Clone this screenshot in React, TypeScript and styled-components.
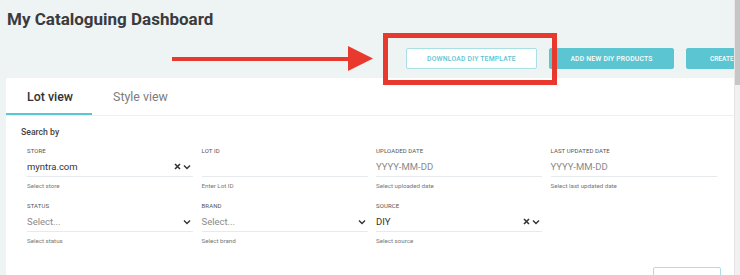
import styled, { createGlobalStyle } from "styled-components";

const teal = "#5bc5d1";
const red = "#e9392f";

const GlobalStyle = createGlobalStyle`
  body {
    margin: 0;
    background: #eef3f4;
    font-family: Roboto, "Liberation Sans", sans-serif;
    color: #333;
    overflow: hidden;
  }
`;

const Page = styled.div`
  position: relative;
  width: 735px;
  min-height: 890px;
  overflow: hidden;
  padding-left: 6px;
  box-sizing: border-box;
`;

const Scrollbar = styled.div`
  position: fixed;
  top: 0;
  right: 0;
  width: 5px;
  height: 100vh;
  background: #f1f1f1;
  border-left: 1px solid #e6e6e6;
  &::before {
    content: "";
    display: block;
    height: 85px;
    background: #c6c6c6;
  }
`;

const Title = styled.h1`
  margin: 0;
  padding: 9px 0 0 1px;
  font-size: 17px;
  line-height: 20px;
  font-weight: 700;
  color: #3a3b3d;
`;

const Toolbar = styled.div`
  display: flex;
  justify-content: flex-start;
  gap: 12px;
  margin: 19px 0 9px 400px;
`;

type ButtonProps = { $filled?: boolean; $width: number };

const Button = styled.button<ButtonProps>`
  width: ${(p) => p.$width}px;
  height: 21px;
  padding: 0;
  border-radius: 2px;
  border: 1px solid ${(p) => (p.$filled ? teal : "#a9e0e6")};
  background: ${(p) => (p.$filled ? teal : "#fff")};
  color: ${(p) => (p.$filled ? "#fff" : teal)};
  font-family: Roboto, "Liberation Sans", sans-serif;
  font-size: 6.8px;
  font-weight: 500;
  letter-spacing: 0.2px;
  text-transform: uppercase;
  flex-shrink: 0;
`;

const CreateButton = styled(Button)`
  text-align: left;
  padding-left: 23px;
  letter-spacing: 0;
  font-size: 6.5px;
`;

const Card = styled.div`
  background: #fff;
  border-radius: 2px;
  min-height: 700px;
`;

const Tabs = styled.div`
  display: flex;
  border-bottom: 1px solid #eef1f2;
`;

const Tab = styled.div<{ $active?: boolean }>`
  padding: 1px 19px 0 21px;
  height: 34px;
  display: flex;
  align-items: center;
  font-size: 12.4px;
  font-weight: ${(p) => (p.$active ? 500 : 400)};
  color: ${(p) => (p.$active ? "#333" : "#7c7c7c")};
  border-bottom: 2px solid ${(p) => (p.$active ? teal : "transparent")};
`;

const SearchSection = styled.div`
  padding: 10px 14px 0 15px;
  display: flex;
  flex-direction: column;
`;

const SearchTitle = styled.div`
  font-size: 8.7px;
  line-height: 12px;
  font-weight: 500;
  color: #444;
`;

const Grid = styled.div`
  display: grid;
  grid-template-columns: repeat(4, 166px);
  column-gap: 8.5px;
  row-gap: 12px;
  margin: 9px 0 0 6px;
`;

const Field = styled.div`
  display: flex;
  flex-direction: column;
`;

const Label = styled.div`
  font-size: 6px;
  line-height: 8px;
  color: #555;
  text-transform: uppercase;
  letter-spacing: 0.1px;
`;

const InputRow = styled.div`
  display: flex;
  align-items: center;
  height: 19px;
  border-bottom: 1px solid #e6eaec;
  padding-top: 2px;
`;

const Value = styled.span<{ $placeholder?: boolean }>`
  flex: 1;
  font-size: 9.5px;
  color: ${(p) => (p.$placeholder ? "#8a8a8a" : "#333")};
`;

const Icons = styled.span`
  display: flex;
  align-items: center;
  gap: 2px;
  padding-right: 2px;
`;

const Helper = styled.div`
  margin-top: 5px;
  font-size: 6.2px;
  line-height: 8px;
  color: #777;
`;

const Actions = styled.div`
  display: flex;
  justify-content: flex-end;
  margin-top: 22px;
`;

const Arrow = styled.svg`
  position: absolute;
  left: 170px;
  top: 44px;
`;

const Highlight = styled.div`
  position: absolute;
  left: 383px;
  top: 33px;
  width: 164px;
  height: 42px;
  border: 5px solid ${red};
`;

const ClearIcon = () => (
  <svg width="7" height="7" viewBox="0 0 7 7">
    <path d="M1 1 L6 6 M6 1 L1 6" stroke="#333" strokeWidth="1.6" />
  </svg>
);

const ChevronIcon = () => (
  <svg width="8" height="6" viewBox="0 0 8 6">
    <path d="M1 1.5 L4 4.5 L7 1.5" stroke="#333" strokeWidth="1.4" fill="none" />
  </svg>
);

type FieldData = {
  label: string;
  value: string;
  placeholder?: boolean;
  helper: string;
  clear?: boolean;
  chevron?: boolean;
};

const fields: FieldData[] = [
  { label: "Store", value: "myntra.com", helper: "Select store", clear: true, chevron: true },
  { label: "Lot ID", value: "", helper: "Enter Lot ID" },
  { label: "Uploaded date", value: "YYYY-MM-DD", placeholder: true, helper: "Select uploaded date" },
  { label: "Last updated date", value: "YYYY-MM-DD", placeholder: true, helper: "Select last updated date" },
  { label: "Status", value: "Select...", placeholder: true, helper: "Select status", chevron: true },
  { label: "Brand", value: "Select...", placeholder: true, helper: "Select brand", chevron: true },
  { label: "Source", value: "DIY", helper: "Select source", clear: true, chevron: true },
];

function App() {
  return (
    <>
      <GlobalStyle />
      <Page>
        <Title>My Cataloguing Dashboard</Title>
        <Toolbar>
          <Button $width={131}>Download DIY template</Button>
          <Button $filled $width={125}>Add new DIY products</Button>
          <CreateButton $filled $width={74}>Create</CreateButton>
        </Toolbar>
        <Card>
          <Tabs>
            <Tab $active>Lot view</Tab>
            <Tab>Style view</Tab>
          </Tabs>
          <SearchSection>
            <SearchTitle>Search by</SearchTitle>
            <Grid>
              {fields.map((f) => (
                <Field key={f.label}>
                  <Label>{f.label}</Label>
                  <InputRow>
                    <Value $placeholder={f.placeholder}>{f.value}</Value>
                    {(f.clear || f.chevron) && (
                      <Icons>
                        {f.clear && <ClearIcon />}
                        {f.chevron && <ChevronIcon />}
                      </Icons>
                    )}
                  </InputRow>
                  <Helper>{f.helper}</Helper>
                </Field>
              ))}
            </Grid>
            <Actions>
              <Button $width={68}>Search</Button>
            </Actions>
          </SearchSection>
        </Card>
        <Arrow width="206" height="30" viewBox="0 0 206 30">
          <rect x="2" y="13" width="178" height="4" fill={red} />
          <polygon points="178,2 203,14.5 178,27" fill={red} />
        </Arrow>
        <Highlight />
      </Page>
      <Scrollbar />
    </>
  );
}

export default App;
